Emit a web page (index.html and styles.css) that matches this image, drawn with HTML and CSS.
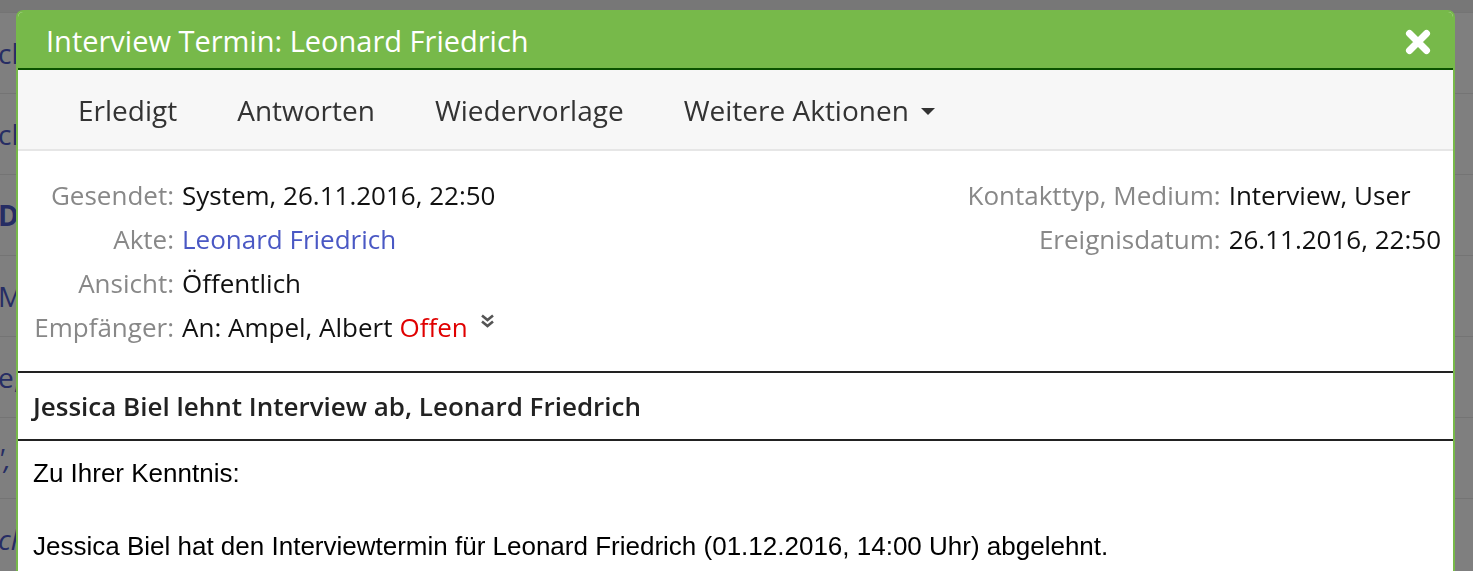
FILE: index.html
```html
<!DOCTYPE html>
<html lang="de">
<head>
<meta charset="utf-8">
<title>Interview Termin</title>
<link rel="stylesheet" href="styles.css">
</head>
<body>
<div class="page">
  <div class="page-top"></div>
  <div class="row"><div class="cell first"><span class="frag">ch</span></div><div class="cell c2"></div><div class="cell c3"></div><div class="cell c4"></div><div class="cell c5"></div><div class="cell c6"></div></div>
  <div class="row"><div class="cell first"><span class="frag">ch</span></div><div class="cell c2"></div><div class="cell c3"></div><div class="cell c4"></div><div class="cell c5"></div><div class="cell c6"></div></div>
  <div class="row"><div class="cell first"><span class="frag bold">DI</span></div><div class="cell c2"></div><div class="cell c3"></div><div class="cell c4"></div><div class="cell c5"></div><div class="cell c6"></div></div>
  <div class="row"><div class="cell first"><span class="frag">M</span></div><div class="cell c2"></div><div class="cell c3"></div><div class="cell c4"></div><div class="cell c5"></div><div class="cell c6"></div></div>
  <div class="row"><div class="cell first"><span class="frag">e,</span></div><div class="cell c2"></div><div class="cell c3"></div><div class="cell c4"></div><div class="cell c5"></div><div class="cell c6"></div></div>
  <div class="row"><div class="cell first"><span class="frag ital">',</span></div><div class="cell c2"></div><div class="cell c3"></div><div class="cell c4"></div><div class="cell c5"></div><div class="cell c6"></div></div>
  <div class="row"><div class="cell first"><span class="frag ital">ch</span></div><div class="cell c2"></div><div class="cell c3"></div><div class="cell c4"></div><div class="cell c5"></div><div class="cell c6"></div></div>
</div>
<div class="overlay"></div>
<div class="modal">
  <div class="modal-header">
    <h1 class="modal-title">Interview Termin: Leonard Friedrich</h1>
    <button class="close" aria-label="Schließen">
      <svg width="26" height="26" viewBox="0 0 26 26"><path d="M4.5 4.5 L21.5 21.5 M21.5 4.5 L4.5 21.5" stroke="#fff" stroke-width="7" stroke-linecap="round"/></svg>
    </button>
  </div>
  <div class="toolbar">
    <span class="tool">Erledigt</span>
    <span class="tool">Antworten</span>
    <span class="tool">Wiedervorlage</span>
    <span class="tool">Weitere Aktionen <span class="caret"></span></span>
  </div>
  <div class="meta">
    <div class="meta-grid left">
      <span class="label">Gesendet:</span><span class="value">System, 26.11.2016, 22:50</span>
      <span class="label">Akte:</span><span class="value link">Leonard Friedrich</span>
      <span class="label">Ansicht:</span><span class="value">Öffentlich</span>
      <span class="label">Empfänger:</span><span class="value">An: Ampel, Albert <span class="red">Offen</span><svg class="chev" width="15" height="14" viewBox="0 0 15 14"><path d="M2 1.5 L7.5 6 L13 1.5 M2 7.5 L7.5 12 L13 7.5" fill="none" stroke="#555" stroke-width="2.6"/></svg></span>
    </div>
    <div class="meta-grid right">
      <span class="label">Kontakttyp, Medium:</span><span class="value">Interview, User</span>
      <span class="label">Ereignisdatum:</span><span class="value">26.11.2016, 22:50</span>
    </div>
  </div>
  <div class="subject">Jessica Biel lehnt Interview ab, Leonard Friedrich</div>
  <div class="message">
    <p>Zu Ihrer Kenntnis:</p>
    <p>Jessica Biel hat den Interviewtermin für Leonard Friedrich (01.12.2016, 14:00 Uhr) abgelehnt.</p>
  </div>
</div>
</body>
</html>
```

FILE: styles.css
```css
html, body {
  margin: 0;
  padding: 0;
  background: #ffffff;
  overflow: hidden;
  height: 571px;
}

.page {
  font-family: "Open Sans", sans-serif;
}

.page-top {
  height: 12px;
  background: #eeeeee;
}

.row {
  display: flex;
  height: 81px;
  border-top: 1px solid #e8e8e8;
  box-sizing: border-box;
}

.cell {
  border-left: 1px solid #e8e8e8;
  display: flex;
  align-items: center;
}

.cell.first { width: 283px; border-left: none; overflow: hidden; }
.cell.c2 { width: 375px; }
.cell.c3 { width: 244px; }
.cell.c4 { width: 204px; }
.cell.c5 { width: 204px; }
.cell.c6 { flex: 1; }

.frag {
  font-size: 28px;
  color: #4c5ac8;
  margin-left: -2px;
}
.frag.bold { font-weight: 700; }
.frag.ital { font-style: italic; }

.overlay {
  position: fixed;
  inset: 0;
  background: rgba(0, 0, 0, 0.5);
}

.modal {
  position: absolute;
  left: 16px;
  top: 10px;
  width: 1439px;
  height: 600px;
  box-sizing: border-box;
  border: 2px solid #77b94a;
  border-bottom: none;
  border-radius: 7px 7px 0 0;
  background: #ffffff;
  font-family: "Open Sans", sans-serif;
}

.modal-header {
  height: 56px;
  background: #77b94a;
  border-bottom: 2px solid #0b5200;
  display: flex;
  align-items: center;
  justify-content: space-between;
  padding: 0 22px 0 28px;
  border-radius: 5px 5px 0 0;
}

.modal-title {
  margin: 0;
  font-size: 29px;
  font-weight: 400;
  color: #ffffff;
  line-height: 1;
  padding-top: 1px;
}

.close {
  background: none;
  border: none;
  padding: 0;
  width: 26px;
  height: 26px;
  display: flex;
  cursor: pointer;
  margin-top: 4px;
}

.toolbar {
  height: 79px;
  background: #f7f7f7;
  border-bottom: 2px solid #e6e6e6;
  display: flex;
  align-items: center;
  padding-left: 30px;
}

.tool {
  font-size: 28px;
  color: #333333;
  padding: 0 30px;
  display: flex;
  align-items: center;
}

.caret {
  display: inline-block;
  width: 0;
  height: 0;
  border-left: 7px solid transparent;
  border-right: 7px solid transparent;
  border-top: 7px solid #333333;
  margin-left: 12px;
  margin-top: 3px;
}

.meta {
  display: flex;
  justify-content: space-between;
  align-items: flex-start;
  padding: 22px 12px 22px 0;
}

.meta-grid {
  display: grid;
  grid-template-columns: auto auto;
  column-gap: 8px;
  font-size: 26px;
  line-height: 44px;
  align-content: start;
}

.meta-grid.left {
  grid-template-columns: 156px auto;
}

.label {
  color: #888888;
  text-align: right;
}

.value {
  color: #111111;
  display: flex;
  align-items: flex-start;
}

.value.link { color: #4a58c4; }

.red {
  color: #e00000;
  margin-left: 7px;
}

.chev {
  margin-left: 12px;
  margin-top: 9px;
}

.subject {
  border-top: 2px solid #222222;
  border-bottom: 2px solid #222222;
  height: 70px;
  box-sizing: border-box;
  display: flex;
  align-items: center;
  padding-left: 15px;
  font-size: 26px;
  font-weight: 600;
  color: #222222;
}

.message {
  font-family: "Liberation Sans", Arial, sans-serif;
  font-size: 26px;
  line-height: 36.5px;
  color: #000000;
  padding: 14px 15px;
}

.message p {
  margin: 0 0 36.5px 0;
}
```
